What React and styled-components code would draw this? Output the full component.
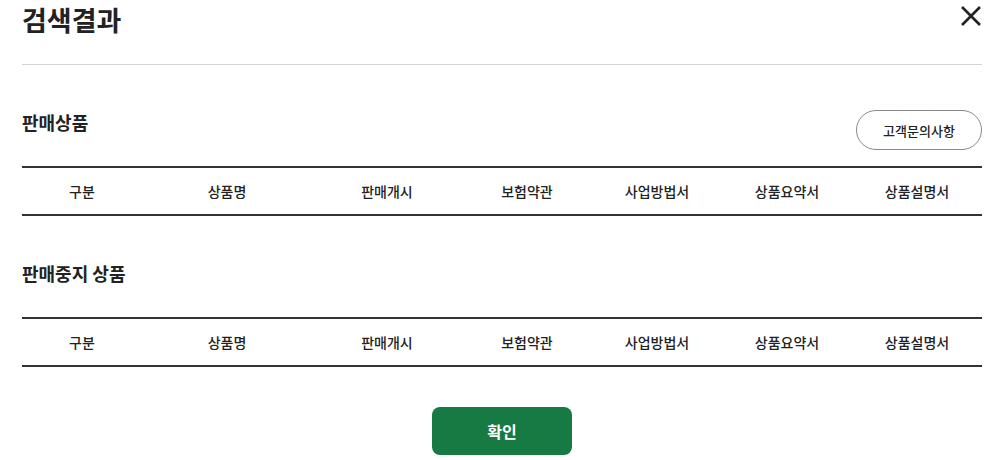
import React from "react";
import styled, { createGlobalStyle } from "styled-components";

const GlobalStyle = createGlobalStyle`
  html, body {
    margin: 0;
    padding: 0;
    background: #fff;
  }
  body {
    font-family: "Noto Sans CJK KR", "Noto Sans", sans-serif;
    color: #222;
  }
`;

const columns = [
  { label: "구분", width: 120 },
  { label: "상품명", width: 170 },
  { label: "판매개시", width: 150 },
  { label: "보험약관", width: 130 },
  { label: "사업방법서", width: 130 },
  { label: "상품요약서", width: 130 },
  { label: "상품설명서", width: 130 },
];

function ProductTable() {
  return (
    <Table>
      <colgroup>
        {columns.map((c) => (
          <col key={c.label} width={c.width} />
        ))}
      </colgroup>
      <thead>
        <tr>
          {columns.map((c) => (
            <Th key={c.label}>{c.label}</Th>
          ))}
        </tr>
      </thead>
    </Table>
  );
}

export default function App() {
  return (
    <>
      <GlobalStyle />
      <Modal>
        <Header>
          <Title>검색결과</Title>
          <CloseBtn aria-label="닫기">
            <svg width="22" height="22" viewBox="0 0 22 22">
              <path d="M2 2 L20 20 M20 2 L2 20" stroke="#222" strokeWidth="2.6" fill="none" />
            </svg>
          </CloseBtn>
        </Header>

        <Section>
          <SectionHead>
            <SectionTitle>판매상품</SectionTitle>
            <OutlineBtn>고객문의사항</OutlineBtn>
          </SectionHead>
          <ProductTable />
        </Section>

        <Section>
          <SectionHead>
            <SectionTitle>판매중지 상품</SectionTitle>
          </SectionHead>
          <ProductTable />
        </Section>

        <Footer>
          <ConfirmBtn>확인</ConfirmBtn>
        </Footer>
      </Modal>
    </>
  );
}

const Modal = styled.div`
  width: 960px;
  padding: 0 10px 0 22px;
`;

const Header = styled.div`
  display: flex;
  justify-content: space-between;
  align-items: flex-start;
  height: 64px;
  border-bottom: 1px solid #d4d4d4;
`;

const Title = styled.h1`
  margin: 0;
  font-size: 27px;
  line-height: 40px;
  font-weight: 700;
  color: #222;
`;

const CloseBtn = styled.button`
  border: 0;
  background: transparent;
  padding: 0;
  margin: 5px 0 0;
  width: 22px;
  height: 22px;
  cursor: pointer;
  svg {
    display: block;
  }
`;

const Section = styled.section`
  margin-top: 45px;
`;

const SectionHead = styled.div`
  display: flex;
  justify-content: space-between;
  align-items: flex-start;
  min-height: 40px;
  margin-bottom: 16px;
`;

const SectionTitle = styled.h2`
  margin: 0;
  font-size: 18px;
  line-height: 24px;
  font-weight: 700;
  color: #222;
`;

const OutlineBtn = styled.button`
  width: 126px;
  height: 40px;
  border: 1px solid #8a8a8a;
  border-radius: 20px;
  background: #fff;
  font-family: inherit;
  font-size: 13px;
  font-weight: 500;
  color: #222;
  cursor: pointer;
`;

const Table = styled.table`
  width: 960px;
  border-collapse: collapse;
  table-layout: fixed;
  border-top: 2px solid #333;
  border-bottom: 2px solid #333;
`;

const Th = styled.th`
  height: 46px;
  padding: 0;
  font-size: 14px;
  font-weight: 500;
  color: #222;
  text-align: center;
  vertical-align: middle;
`;

const Footer = styled.div`
  display: flex;
  justify-content: center;
  margin-top: 40px;
`;

const ConfirmBtn = styled.button`
  width: 140px;
  height: 48px;
  border: 0;
  border-radius: 8px;
  background: #177a43;
  color: #fff;
  font-family: inherit;
  font-size: 16px;
  font-weight: 700;
  cursor: pointer;
`;
